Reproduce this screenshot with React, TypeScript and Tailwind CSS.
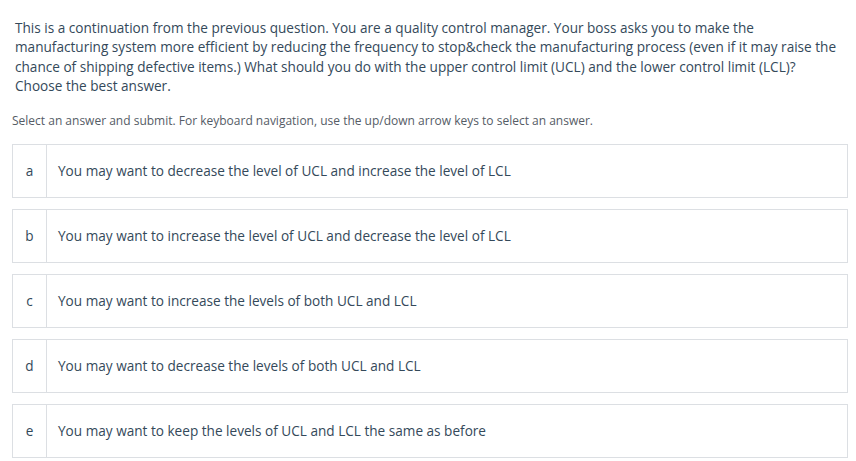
const options = [
  { key: "a", text: "You may want to decrease the level of UCL and increase the level of LCL" },
  { key: "b", text: "You may want to increase the level of UCL and decrease the level of LCL" },
  { key: "c", text: "You may want to increase the levels of both UCL and LCL" },
  { key: "d", text: "You may want to decrease the levels of both UCL and LCL" },
  { key: "e", text: "You may want to keep the levels of UCL and LCL the same as before" },
];

export default function App() {
  return (
    <div className="min-h-screen bg-white font-['Open_Sans',sans-serif] text-[#34495a]">
      <div className="px-[12px] pt-[18px]">
        <p className="pl-[3px] text-[13.6px] leading-[19.3px]">
          This is a continuation from the previous question. You are a quality control manager. Your boss asks you to make the
          <br />
          manufacturing system more efficient by reducing the frequency to stop&amp;check the manufacturing process (even if it may raise the
          <br />
          chance of shipping defective items.) What should you do with the upper control limit (UCL) and the lower control limit (LCL)?
          <br />
          Choose the best answer.
        </p>
        <p className="mt-[18px] text-[12px] leading-[16px] text-[#555c66]">
          Select an answer and submit. For keyboard navigation, use the up/down arrow keys to select an answer.
        </p>
        <div className="mt-[15px] flex w-[836px] flex-col gap-[11px]">
          {options.map((o) => (
            <div key={o.key} className="flex h-[54px] border border-[#dcdfe3] bg-white">
              <div className="flex w-[34px] items-center justify-center border-r border-[#dcdfe3] text-[13.6px]">
                {o.key}
              </div>
              <div className="flex items-center pl-[11px] text-[13.6px]">{o.text}</div>
            </div>
          ))}
        </div>
      </div>
    </div>
  );
}
